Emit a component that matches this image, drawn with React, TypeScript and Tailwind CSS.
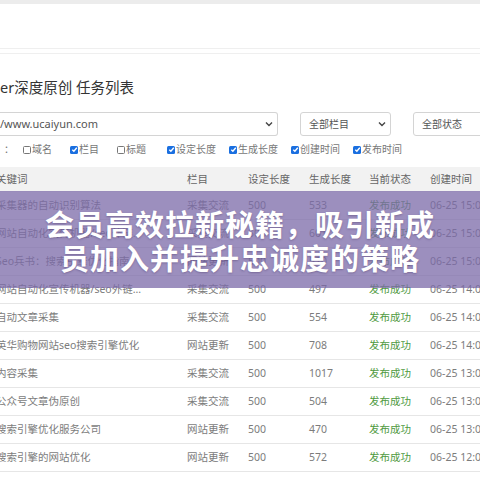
const font = { fontFamily: '"Noto Sans", "Noto Sans CJK SC", sans-serif' };

interface Row {
  kw: string;
  col: string;
  set: string;
  gen: string;
  time: string;
}

const rows: Row[] = [
  { kw: "采集器的自动识别算法", col: "采集交流", set: "500", gen: "533", time: "06-25 15:07" },
  { kw: "网站自动化宣传机器/seo外链...", col: "采集交流", set: "500", gen: "601", time: "06-25 15:04" },
  { kw: "Seo兵书：搜索引擎优化指南", col: "网站更新", set: "500", gen: "520", time: "06-25 15:01" },
  { kw: "网站自动化宣传机器/seo外链...", col: "采集交流", set: "500", gen: "497", time: "06-25 14:08" },
  { kw: "自动文章采集", col: "采集交流", set: "500", gen: "554", time: "06-25 14:05" },
  { kw: "英华购物网站seo搜索引擎优化", col: "网站更新", set: "500", gen: "708", time: "06-25 14:02" },
  { kw: "内容采集", col: "采集交流", set: "500", gen: "1017", time: "06-25 13:08" },
  { kw: "公众号文章伪原创", col: "采集交流", set: "500", gen: "504", time: "06-25 13:05" },
  { kw: "搜索引擎优化服务公司", col: "网站更新", set: "500", gen: "470", time: "06-25 13:02" },
  { kw: "搜索引擎的网站优化", col: "网站更新", set: "500", gen: "572", time: "06-25 12:09" },
];

const cols = "grid grid-cols-[191px_61px_61px_60px_61px_1fr]";

const Chevron = () => (
  <svg width="8" height="6" viewBox="0 0 8 6" fill="none" stroke="#444" strokeWidth="1.4">
    <path d="M1 1.5 L4 4.5 L7 1.5" />
  </svg>
);

const Check = ({ on, label }: { on: boolean; label: string }) => (
  <span className="flex items-center">
    {on ? (
      <span className="w-[8px] h-[8px] rounded-[1.5px] bg-[#1a6fe0] flex items-center justify-center">
        <svg width="7" height="7" viewBox="0 0 8 8" fill="none" stroke="#fff" strokeWidth="1.6">
          <path d="M1.5 4.2 L3.3 6 L6.6 2" />
        </svg>
      </span>
    ) : (
      <span className="w-[8px] h-[8px] rounded-[1.5px] border border-[#777] bg-white" />
    )}
    <span className="ml-[1px]">{label}</span>
  </span>
);

export default function App() {
  return (
    <div className="relative w-[480px] h-[480px] overflow-hidden bg-white text-[#666]" style={font}>
      <div className="h-[4px] bg-[#ececec]" />
      <div className="h-[45px] border-b border-[#efefef]" />
      <div className="h-[4px]" />
      <div className="border-t border-[#efefef]">
        <div className="h-[64px] flex items-center pt-[3px] text-[14.5px] text-[#333]">er深度原创 任务列表</div>
      </div>

      <div className="flex items-center h-[24px] -mt-[6px]">
        <div className="shrink-0 w-[278px] h-[24px] border border-[#d4d4d4] border-l-0 rounded-r-[3px] flex items-center justify-between pr-[4px] text-[11px] text-[#555]">
          <span>/www.ucaiyun.com</span>
          <Chevron />
        </div>
        <div className="shrink-0 ml-[22px] w-[91px] h-[24px] border border-[#d4d4d4] rounded-[3px] flex items-center justify-between pl-[8px] pr-[4px] text-[10px] text-[#555]">
          <span>全部栏目</span>
          <Chevron />
        </div>
        <div className="shrink-0 ml-[22px] w-[90px] h-[24px] border border-[#d4d4d4] rounded-[3px] flex items-center pl-[8px] text-[10px] text-[#555]">
          <span>全部状态</span>
        </div>
      </div>

      <div className="flex items-center h-[31px] pb-[4px] text-[10px] text-[#777]">
        <span className="ml-[4px] w-[19px]">：</span>
        <Check on={false} label="域名" />
        <span className="ml-[18px]"><Check on label="栏目" /></span>
        <span className="ml-[18px]"><Check on={false} label="标题" /></span>
        <span className="ml-[21px]"><Check on label="设定长度" /></span>
        <span className="ml-[13px]"><Check on label="生成长度" /></span>
        <span className="ml-[13px]"><Check on label="创建时间" /></span>
        <span className="ml-[13px]"><Check on label="发布时间" /></span>
      </div>

      <div className="-ml-[4px] text-[10.5px]">
        <div className={`${cols} h-[25px] items-center bg-[#f2f2f2] text-[#666]`}>
          <span>关键词</span>
          <span>栏目</span>
          <span>设定长度</span>
          <span>生成长度</span>
          <span>当前状态</span>
          <span className="whitespace-nowrap">创建时间</span>
        </div>
        {rows.map((r, i) => (
          <div key={i} className={`${cols} h-[28px] items-center border-b border-[#e6e6e6] text-[#7c7c7c] whitespace-nowrap`}>
            <span className="overflow-hidden">{r.kw}</span>
            <span>{r.col}</span>
            <span>{r.set}</span>
            <span>{r.gen}</span>
            <span className="text-[#4e9a3e]">发布成功</span>
            <span>{r.time}</span>
          </div>
        ))}
      </div>

      <div className="absolute left-0 right-0 top-[191px] h-[97px] bg-[#7b6aa8]/75 flex flex-col items-center justify-center">
        <div
          className="text-white font-bold text-[29px] leading-[34px] tracking-[1px] text-center [text-shadow:0_1px_2px_rgba(60,40,90,0.35)]"
          style={{ fontFamily: '"Noto Sans CJK SC", sans-serif' }}
        >
          <div>会员高效拉新秘籍，吸引新成</div>
          <div>员加入并提升忠诚度的策略</div>
        </div>
      </div>
    </div>
  );
}
